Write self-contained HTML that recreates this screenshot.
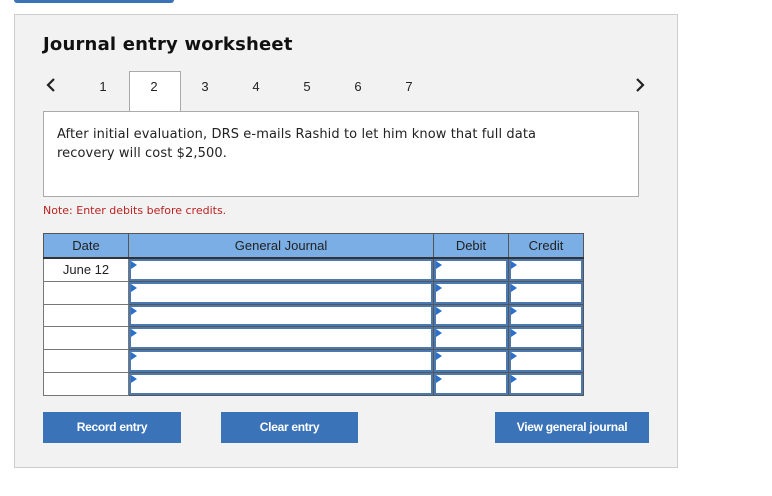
<!DOCTYPE html>
<html><head><style>
body{margin:0;width:772px;height:496px;background:#fff;position:relative;font-family:"DejaVu Sans","Liberation Sans",sans-serif;overflow:hidden}
.a{position:absolute}
.topbar{left:14px;top:0;width:160px;height:3px;background:#3b73b9;border-radius:0 0 3px 3px}
.panel{left:14px;top:14px;width:662px;height:452px;background:#f2f2f2;border:1px solid #ccc}
.title{left:43px;top:34px;font-size:18px;font-weight:bold;color:#111;letter-spacing:0.2px}
.tab{font-family:"Liberation Sans",sans-serif;font-size:13px;color:#222;top:79px;width:20px;text-align:center}
.tabsel{left:129px;top:71px;width:50px;height:41px;background:#fff;border:1px solid #aaa;border-bottom:none}
.box{left:43px;top:111px;width:594px;height:84px;background:#fff;border:1px solid #aaa}
.txt{left:57px;top:125px;font-size:13px;line-height:19px;color:#222;letter-spacing:0.1px}
.note{left:43px;top:204px;font-size:11px;color:#b22}
table{position:absolute;left:43px;top:233px;border-collapse:collapse;font-family:"Liberation Sans",sans-serif;font-size:13px;color:#222}
th{background:#7aaee4;border:1px solid #555;height:23px;padding:0;font-weight:normal;border-bottom:2px solid #333}
td{border:1px solid #777;height:21.8px;padding:0;background:#fff;text-align:center;position:relative}
td.i{padding:0;border:1px solid #555}
td.i div{border:2px solid #4c79b0;height:17.8px;background:#fff}
td.i div:before{content:"";position:absolute;left:2px;top:2px;border-left:6px solid #2a6fc9;border-top:4px solid transparent;border-bottom:4px solid transparent}
.btn{top:412px;height:31px;background:#3b73b9;color:#fff;font-family:"Liberation Sans",sans-serif;font-weight:bold;font-size:12px;text-align:center;line-height:31px;letter-spacing:-0.3px}
</style></head><body>
<div class="a topbar"></div>
<div class="a panel"></div>
<div class="a title">Journal entry worksheet</div>
<svg class="a" style="left:45px;top:77px" width="12" height="16"><path d="M9 2L3 8L9 14" stroke="#222" stroke-width="2.2" fill="none"/></svg>
<svg class="a" style="left:634px;top:77px" width="12" height="16"><path d="M3 2L9 8L3 14" stroke="#222" stroke-width="2.2" fill="none"/></svg>
<div class="a tabsel"></div>
<div class="a tab" style="left:93px">1</div>
<div class="a tab" style="left:144px">2</div>
<div class="a tab" style="left:195px">3</div>
<div class="a tab" style="left:246px">4</div>
<div class="a tab" style="left:297px">5</div>
<div class="a tab" style="left:348px">6</div>
<div class="a tab" style="left:399px">7</div>
<div class="a box"></div>
<div class="a txt">After initial evaluation, DRS e-mails Rashid to let him know that full data<br>recovery will cost $2,500.</div>
<div class="a note">Note: Enter debits before credits.</div>
<table>
<tr><th style="width:84px">Date</th><th style="width:304px">General Journal</th><th style="width:74px">Debit</th><th style="width:74px">Credit</th></tr>
<tr><td>June 12</td><td class="i"><div></div></td><td class="i"><div></div></td><td class="i"><div></div></td></tr>
<tr><td></td><td class="i"><div></div></td><td class="i"><div></div></td><td class="i"><div></div></td></tr>
<tr><td></td><td class="i"><div></div></td><td class="i"><div></div></td><td class="i"><div></div></td></tr>
<tr><td></td><td class="i"><div></div></td><td class="i"><div></div></td><td class="i"><div></div></td></tr>
<tr><td></td><td class="i"><div></div></td><td class="i"><div></div></td><td class="i"><div></div></td></tr>
<tr><td></td><td class="i"><div></div></td><td class="i"><div></div></td><td class="i"><div></div></td></tr>
</table>
<div class="a btn" style="left:43px;width:138px">Record entry</div>
<div class="a btn" style="left:221px;width:137px">Clear entry</div>
<div class="a btn" style="left:495px;width:154px">View general journal</div>
</body></html>
